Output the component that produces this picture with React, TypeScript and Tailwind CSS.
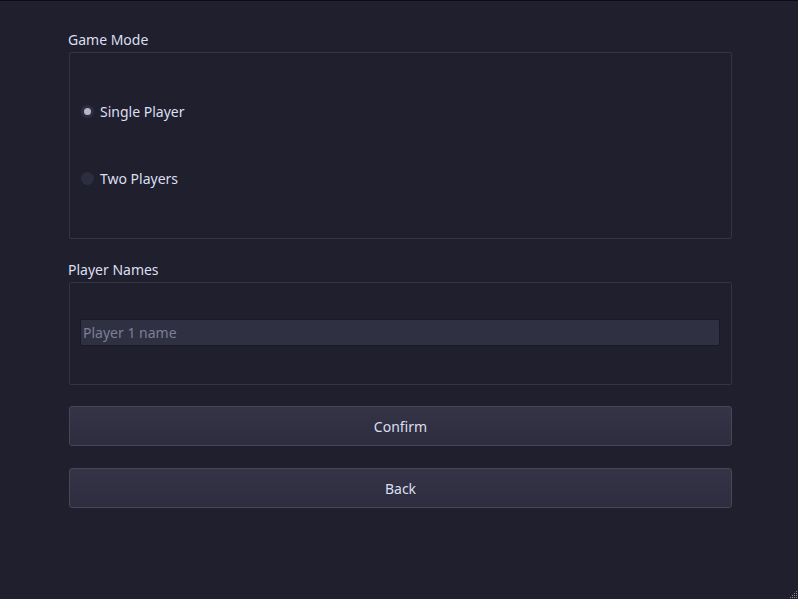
import React from "react";

function Radio({ checked, label }: { checked: boolean; label: string }) {
  return (
    <div className="flex items-center h-[20px]">
      <div className="w-[13px] h-[13px] rounded-full bg-[#2d2d40] flex items-center justify-center ml-[11px]">
        {checked && <div className="w-[7px] h-[7px] rounded-full bg-[#b4b6c6]" />}
      </div>
      <span className="ml-[6px] text-[14px] text-[#dcdfee]">{label}</span>
    </div>
  );
}

export default function App() {
  return (
    <div
      className="w-[798px] h-[599px] bg-[#1f1f2e] border-t border-[#0c0c12] relative flex flex-col pl-[68px] pr-[66px]"
      style={{ fontFamily: '"Noto Sans", sans-serif' }}
    >
      <div className="mt-[28px] h-[20px] flex items-center text-[14px] text-[#dcdfee]">Game Mode</div>
      <div className="mt-[3px] ml-[1px] h-[187px] border border-[#343445] rounded-[2px] flex flex-col pt-[48px]">
        <Radio checked label="Single Player" />
        <div className="h-[47px]" />
        <Radio checked={false} label="Two Players" />
      </div>
      <div className="mt-[20px] h-[20px] flex items-center text-[14px] text-[#dcdfee]">Player Names</div>
      <div className="mt-[3px] ml-[1px] h-[103px] border border-[#343445] rounded-[2px] flex flex-col pt-[36px] pl-[10px] pr-[11px]">
        <div className="h-[27px] bg-[#303043] border border-[#1a1a26] rounded-[2px] flex items-center px-[2px]">
          <span className="text-[14px] text-[#7d7f94]">Player 1 name</span>
        </div>
      </div>
      <button className="mt-[21px] ml-[1px] h-[40px] rounded-[3px] border border-[#474759] bg-gradient-to-b from-[#343446] to-[#2d2d3f] text-[14px] text-[#dcdfee]">
        Confirm
      </button>
      <button className="mt-[22px] ml-[1px] h-[40px] rounded-[3px] border border-[#474759] bg-gradient-to-b from-[#343446] to-[#2d2d3f] text-[14px] text-[#dcdfee]">
        Back
      </button>
      <svg className="absolute right-0 bottom-0" width="10" height="10" viewBox="0 0 10 10">
        {[
          [8, 2], [6, 4], [8, 4], [4, 6], [6, 6], [8, 6], [2, 8], [4, 8], [6, 8], [8, 8],
        ].map(([x, y], i) => (
          <rect key={i} x={x} y={y} width="1" height="1" fill="#8a8a9c" />
        ))}
      </svg>
    </div>
  );
}
